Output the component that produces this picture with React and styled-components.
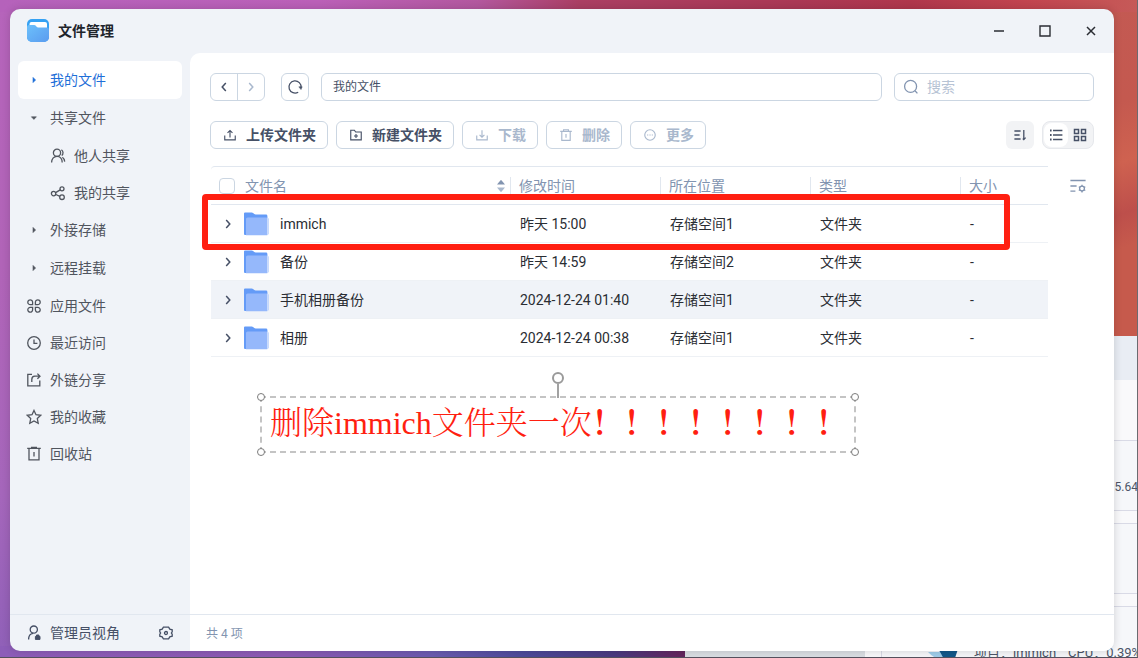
/**
 *
 * FileManager
 *
 */

import React from 'react'
import styled, { createGlobalStyle } from 'styled-components'

const Colors = {
  blue: '#1f6fd8',
  text: '#2a2d33',
  nav: '#50555e',
  strong: '#465066',
  muted: '#8294b0',
  disabled: '#a9b8cd',
  border: '#cbd6e2',
  line: '#e1e7ef',
  panel: '#f0f3f8',
  red: '#ff1f11',
}

const GlobalStyle = createGlobalStyle`
  *, *::before, *::after {
    box-sizing: border-box;
  }

  body {
    margin: 0;
    overflow: hidden;
    font-family: Roboto, 'Noto Sans CJK SC', sans-serif;
    font-size: 14px;
    line-height: 20px;
    color: ${Colors.text};
  }

  button, input {
    font: inherit;
    color: inherit;
  }

  button {
    padding: 0;
    border: 0;
    background: none;
    cursor: pointer;
  }

  svg {
    display: block;
    flex: none;
  }
`

const Desktop = styled.div`
  position: relative;
  height: 100vh;
  overflow: hidden;
  background:
    linear-gradient(to right, #8d5db8 0%, #8c5bb4 25%, #6a5bb0 38%, #4d4a9a 46%, #4a3a80 54%, #64265e 60%) bottom / 100% 12px no-repeat,
    linear-gradient(to right, #b562bb 0%, #bb60b8 28%, #b3589f 42%, #ab3f63 51%, #ab3855 70%, #b0374c 80%, #c2444f 90%, #c65a58 100%) top / 100% 12px no-repeat,
    linear-gradient(to bottom, #b664bb 0%, #b164b8 40%, #a566bb 75%, #8f60b8 100%) left / 50% 100% no-repeat,
    linear-gradient(160deg, #c25a5a 0%, #c4594f 35%, #cf6250 42%, #bd4f4b 48%, #c65a4c 52%) right / 50% 100% no-repeat;

  &::after {
    content: '';
    position: absolute;
    inset: 0;
    border-right: 1px solid #6b6b70;
    border-bottom: 1px solid #55505c;
    pointer-events: none;
  }
`

const BackWindow = styled.section`
  position: absolute;
  top: 336px;
  right: 0;
  bottom: 0;
  width: 453px;
  display: grid;
  grid-template-columns: 180px minmax(0, 1fr);
  grid-template-rows: 44px 1fr;
  background: #f9f9fb;
  font-size: 13px;
  color: #4c5568;
`

const BackTitle = styled.div`
  grid-column: 1 / -1;
  background: #e9edf4;
`

const BackSide = styled.div`
  background: #dadee3;
`

const BackCards = styled.div`
  display: flex;
  flex-direction: column;
  gap: 12px;
  padding: 60px 0 0 16px;
`

const BackCard = styled.div`
  display: flex;
  align-items: center;
  gap: 12px;
  height: 71px;
  flex: none;
  padding: 22px 0 0 46px;
  border: 1px solid #d9dae6;
  border-right: 0;
  background: #f6f7fa;
  white-space: nowrap;
`

const BackValue = styled.span`
  margin-left: auto;
  font-size: 12px;
`

const Window = styled.main`
  position: absolute;
  inset: 9px 24px 7px 10px;
  display: grid;
  grid-template-columns: 180px minmax(0, 1fr);
  grid-template-rows: 44px minmax(0, 1fr) 37px;
  overflow: hidden;
  border-radius: 10px;
  background: ${Colors.panel};
  box-shadow: 0 0 8px rgba(0, 0, 0, 0.16);
`

const TitleBar = styled.header`
  grid-column: 1 / -1;
  display: flex;
  align-items: center;
  gap: 8px;
  padding-left: 16px;
`

const Title = styled.h1`
  flex: 1;
  margin: 0;
  font-size: 14px;
  font-weight: 700;
  color: #20242b;
`

const WindowControls = styled.div`
  display: flex;
  height: 100%;
`

const WindowButton = styled.button`
  display: grid;
  place-items: center;
  width: 46px;
`

const Sidebar = styled.nav`
  padding: 8px;
`

const NavItem = styled.a`
  display: flex;
  align-items: center;
  gap: 8px;
  height: ${props => (props.$compact ? 37 : 38)}px;
  padding-left: ${props => (props.$nested ? 32 : 8)}px;
  border-radius: 6px;
  background: ${props => (props.$active ? '#fff' : 'transparent')};
  color: ${props => (props.$active ? Colors.blue : Colors.nav)};
  text-decoration: none;
`

const Content = styled.section`
  padding: 20px 20px 0;
  border-top-left-radius: 10px;
  background: #fff;
`

const AddressRow = styled.div`
  display: flex;
  gap: 12px;
  margin-bottom: 20px;
`

const History = styled.div`
  display: flex;
  height: 28px;
  margin-right: 4px;
  border: 1px solid ${Colors.border};
  border-radius: 6px;
`

const HistoryButton = styled.button`
  display: grid;
  place-items: center;
  width: 26px;
  color: ${Colors.strong};

  & + & {
    width: 27px;
    border-left: 1px solid ${Colors.border};
    color: ${Colors.disabled};
  }
`

const RefreshButton = styled.button`
  display: grid;
  place-items: center;
  width: 28px;
  height: 28px;
  border: 1px solid ${Colors.border};
  border-radius: 6px;
  color: ${Colors.strong};
`

const Field = styled.label`
  display: flex;
  align-items: center;
  gap: 8px;
  flex: ${props => (props.$grow ? '1' : 'none')};
  width: ${props => (props.$grow ? 'auto' : '200px')};
  height: 28px;
  padding: 0 8px;
  border: 1px solid ${Colors.border};
  border-radius: 6px;
  color: ${Colors.muted};
`

const FieldInput = styled.input`
  flex: 1;
  min-width: 0;
  padding: 0;
  border: 0;
  outline: 0;
  background: none;
  color: ${Colors.strong};

  &::placeholder {
    color: #b7c3d4;
    opacity: 1;
  }
`

const PathInput = styled(FieldInput)`
  padding: 0 3px;
  font-size: 12px;
`

const Toolbar = styled.div`
  display: flex;
  gap: 8px;
  margin-bottom: 17px;
`

const ActionButton = styled.button`
  display: flex;
  align-items: center;
  gap: 8px;
  height: 28px;
  padding: 0 11px;
  border: 1px solid ${Colors.border};
  border-radius: 6px;
  font-weight: 700;
  color: ${Colors.strong};

  &:disabled {
    color: ${Colors.disabled};
    cursor: default;
  }

  svg {
    padding: 1px;
  }
`

const SortButton = styled.button`
  display: grid;
  place-items: center;
  width: 28px;
  height: 28px;
  margin-left: auto;
  border-radius: 6px;
  background: #f2f3f5;
  color: ${Colors.strong};
`

const ViewSwitch = styled.div`
  display: flex;
  align-items: center;
  height: 28px;
  padding: 0 1px;
  border: 1px solid #e6e8ec;
  border-radius: 8px;
  background: #f2f3f5;
  color: ${Colors.strong};
`

const ViewButton = styled.button`
  display: grid;
  place-items: center;
  width: 24px;
  height: 24px;
  border-radius: 8px;
  background: ${props => (props.$active ? '#fff' : 'transparent')};
`

const ListArea = styled.div`
  display: flex;
  gap: 22px;
  padding: 0 8px 0 1px;
`

const TableWrap = styled.div`
  position: relative;
  flex: 1;
  min-width: 0;
`

const ColumnsButton = styled.button`
  width: 16px;
  height: 40px;
  color: ${Colors.muted};
`

const Table = styled.table`
  width: 100%;
  table-layout: fixed;
  border-spacing: 0;
  border-top: 1px solid ${Colors.line};
  border-top-left-radius: 4px;
`

const HeadCell = styled.th`
  width: ${props => (props.$width ? `${props.$width}px` : 'auto')};
  height: 38px;
  padding: 0;
  border-bottom: 1px solid ${Colors.line};
  font-weight: 400;
  line-height: 16px;
  text-align: left;
  color: ${Colors.muted};
`

const HeadLabel = styled.div`
  display: flex;
  align-items: center;
  height: 17px;
  padding-left: 8px;
  border-right: ${props => (props.$last ? '0' : `1px solid ${Colors.line}`)};
`

const NameHead = styled(HeadLabel)`
  justify-content: space-between;
  padding-right: 5px;
`

const CheckLabel = styled.label`
  display: flex;
  align-items: center;
  gap: 10px;
`

const Checkbox = styled.input`
  appearance: none;
  width: 16px;
  height: 16px;
  margin: 0;
  border: 1px solid ${Colors.border};
  border-radius: 4px;
  background: #fff;
`

const Row = styled.tr`
  background: ${props => (props.$hovered ? Colors.panel : '#fff')};
`

const Cell = styled.td`
  height: 38px;
  padding: 0 9px;
  border-bottom: 1px solid #eef1f5;
`

const NameCell = styled.div`
  display: flex;
  align-items: center;
  gap: 8px;
`

const Expander = styled.button`
  width: 16px;
  color: ${Colors.strong};
`

const Highlight = styled.div`
  position: absolute;
  top: 28px;
  left: -9px;
  right: 38px;
  height: 56px;
  border: 6px solid ${Colors.red};
  border-radius: 4px;
  pointer-events: none;
`

const Note = styled.div`
  position: absolute;
  top: 230px;
  left: 49px;
  width: 596px;
  height: 57px;
  padding: 7px 8px;
  border: 2px dashed #c4c4c4;
  font-family: 'Liberation Serif', 'Noto Serif CJK SC', 'Noto Sans CJK SC', serif;
  font-size: 32px;
  font-weight: 300;
  line-height: 36px;
  white-space: nowrap;
  color: ${Colors.red};
`

const Bangs = styled.span`
  font-weight: 700;
`

const Handle = styled.span`
  position: absolute;
  top: ${props => (props.$bottom ? 'auto' : '-5px')};
  bottom: ${props => (props.$bottom ? '-5px' : 'auto')};
  left: ${props => (props.$right ? 'auto' : '-5px')};
  right: ${props => (props.$right ? '-5px' : 'auto')};
  width: 8px;
  height: 8px;
  border: 1px solid #7c7c7c;
  border-radius: 50%;
  background: #fff;
`

const RotateHandle = styled.span`
  position: absolute;
  bottom: 100%;
  left: 50%;
  width: 2px;
  height: 14px;
  margin-left: -1px;
  background: #a2a2a2;

  &::before {
    content: '';
    position: absolute;
    bottom: 100%;
    left: -5px;
    width: 12px;
    height: 12px;
    border: 2px solid #9a9a9a;
    border-radius: 50%;
    background: #fff;
  }
`

const SideFooter = styled.div`
  display: flex;
  align-items: center;
  justify-content: space-between;
  padding: 0 16px;
  border-top: 1px solid ${Colors.line};
  color: ${Colors.strong};
`

const AdminButton = styled.button`
  display: flex;
  align-items: center;
  gap: 8px;
`

const Status = styled.footer`
  padding: 9px 16px 7px;
  border-top: 1px solid ${Colors.line};
  background: #fff;
  font-size: 12px;
  color: ${Colors.muted};
`

const paths = {
  right: <path d="M7 5.4 9.6 8 7 10.6z" fill="currentColor" strokeWidth="0.6" />,
  down: <path d="M5.4 6.8h5L7.9 9.4z" fill="currentColor" strokeWidth="0.6" />,
  users: (
    <>
      <circle cx="7" cy="4.8" r="3.6" />
      <path d="M1.6 14.6c0-3.6 2-6.2 5.4-6.2s5.2 2.6 5.2 6.2M11.4 1.7c2 1.2 2.2 4.4.3 5.8M12.4 9.2c1.4 1 2.2 2.4 2.3 4.4" />
    </>
  ),
  share: (
    <>
      <circle cx="3.6" cy="8.6" r="2.2" />
      <circle cx="12" cy="3.8" r="2" />
      <circle cx="12" cy="12.2" r="2.3" />
      <path d="M5.6 7.6l4.6-2.7M5.8 9.5l4.1 1.8" />
    </>
  ),
  apps: (
    <path d="M6.6 6.6H4.2a2.4 2.4 0 1 1 2.4-2.4zM9.4 6.6V4.2a2.4 2.4 0 1 1 2.4 2.4zM6.6 9.4v2.4a2.4 2.4 0 1 1-2.4-2.4zM9.4 9.4h2.4a2.4 2.4 0 1 1-2.4 2.4z" />
  ),
  clock: (
    <>
      <circle cx="8" cy="8" r="6.3" />
      <path d="M8 4.4V8.4h3.4" />
    </>
  ),
  link: <path d="M6 2.4H1.8v11.4h12V8.6M5.8 10V7.4c0-2 1.2-3.2 3-3.2h5M11.4 1.6 14 4.2l-2.6 2.6" />,
  star: <path d="M8 1.4l2 4.3 4.7.6-3.4 3.2.9 4.7L8 11.9l-4.2 2.3.9-4.7L1.3 6.3 6 5.7z" />,
  trash: <path d="M1.2 2.4h13.6M5 1.4h6M3 2.6v11.2h10V2.6M8 6v4.4" />,
  upload: <path d="M2 8.6v5h12v-5M8 10.8V3M5.2 5.6 8 2.8l2.8 2.8" />,
  download: <path d="M2 8.6v5h12v-5M8 2.6v7.8M5.2 7.8 8 10.6l2.8-2.8" />,
  newFolder: <path d="M2 13.6V2.6h4.2l1.4 2H14v9zM8 6.8v4.6M5.7 9.1h4.6" />,
  bin: <path d="M1.4 3.8h13.2M5.2 3.6V2h5.6v1.6M3.2 3.8v10.4h9.6V3.8M8 6.8v4.2" />,
  more: (
    <>
      <circle cx="8" cy="8" r="6" />
      <path d="M4.7 8h1.3M7.4 8h1.3M10 8h1.3" />
    </>
  ),
  prev: <path d="M9.8 4 6.2 8l3.6 4" strokeWidth="1.5" />,
  next: <path d="M6.2 4 9.8 8l-3.6 4" strokeWidth="1.5" />,
  refresh: (
    <>
      <path d="M11.2 13.2a6.1 6.1 0 1 1 2.9-4.6" />
      <path d="M11.8 7.8h3.4l-1.2 2.8z" fill="currentColor" strokeWidth="0.5" />
    </>
  ),
  search: (
    <>
      <circle cx="7.6" cy="7.4" r="6" />
      <path d="M12 11.8l2.4 2.6" />
    </>
  ),
  sort: (
    <>
      <path d="M2.4 4h6.2M2.4 8h5.2M2.4 12h6.2" />
      <path d="M11.8 3v9.6M13.6 10.6l-1.8 2-1-1.1" />
    </>
  ),
  list: (
    <>
      <path d="M5 3.5h9.4M5 8h9.4M5 12.5h9.4" />
      <path d="M2 3.5h1.6M2 8h1.6M2 12.5h1.6" strokeWidth="1.8" />
    </>
  ),
  grid: <path d="M2.5 2.5h4v4h-4zM9.5 2.5h4v4h-4zM2.5 9.5h4v4h-4zM9.5 9.5h4v4h-4z" strokeWidth="1.5" />,
  columns: (
    <>
      <path d="M0.4 2.5h15.2M0.4 8h6.2M0.4 13.2h5" />
      <circle cx="12" cy="10.6" r="2.4" />
      <path d="M12 6.8v1.4M12 13v1.6M8.8 8.8l1.2.7M14 11.8l1.3.7M8.8 12.5l1.2-.7M14 9.5l1.3-.7" />
    </>
  ),
  admin: (
    <>
      <circle cx="7.8" cy="4.6" r="3.6" />
      <path d="M2.6 14.6c0-3.6 1.6-6 4.4-6.3" />
      <path d="M9.4 11.4h4.6v3H9.4zM10.5 11.4V10h2.4v1.4" fill="currentColor" strokeWidth="1" />
    </>
  ),
  gear: (
    <>
      <path d="M5.4 2.2h5.2l1.2 2 2.4.6v2L13.4 8l.8 1.2v2l-2.4.6-1.2 2H5.4l-1.2-2-2.4-.6v-2L2.6 8l-.8-1.2v-2l2.4-.6z" />
      <circle cx="8" cy="8" r="1.5" />
    </>
  ),
  minimize: <path d="M3 8h10" strokeWidth="1.7" />,
  maximize: <path d="M3 3h10v10H3z" strokeWidth="1.4" />,
  close: <path d="M4 4l8 8M12 4l-8 8" strokeWidth="1.5" />,
}

function Icon({ name }) {
  return (
    <svg
      width="16"
      height="16"
      viewBox="0 0 16 16"
      fill="none"
      stroke="currentColor"
      strokeWidth="1.3"
      aria-hidden="true"
    >
      {paths[name]}
    </svg>
  )
}

function AppIcon() {
  return (
    <svg width="24" height="24" viewBox="0 0 24 24" aria-hidden="true">
      <defs>
        <linearGradient id="appFront" x1="0" y1="0" x2="1" y2="1">
          <stop offset="0" stopColor="#6cc0fb" />
          <stop offset="1" stopColor="#5a9bef" />
        </linearGradient>
      </defs>
      <rect x="1" y="0" width="22" height="23" rx="5" fill="#35a1f3" />
      <rect x="3.5" y="3" width="17.5" height="10" rx="2" fill="#fff" />
      <path
        d="M1 8Q1 6 3.2 6H8q1.4 0 2 1.1.7 1.4 2 1.4h8.8Q23 8.5 23 10.5v7.5a5 5 0 0 1-5 5H6a5 5 0 0 1-5-5z"
        fill="url(#appFront)"
      />
    </svg>
  )
}

function FolderIcon() {
  return (
    <svg width="28" height="24" viewBox="1 0 28 24" aria-hidden="true">
      <path d="M1 1.5Q1 .5 2 .5h6.6q1 0 1.8.8l.9.8q.5.4 1.3.4H23q1.4 0 1.4 1.4V23H2q-1 0-1-1z" fill="#649bf7" />
      <path d="M3 7q0-1.6 1.6-1.6h19.1q1.8 0 1.8 1.6v14.6q0 1.6-1.6 1.6H3z" fill="#95b8fb" />
      <path d="M24 5.5q1.4 0 1.4 1.5v14.6q0 1.6-1.4 1.6z" fill="#c9dbfc" />
    </svg>
  )
}

function SortArrows() {
  return (
    <svg width="8" height="14" viewBox="0 0 8 14" aria-hidden="true">
      <path d="M4 .8 8 5.4H0z" fill="#8294b0" />
      <path d="M0 8.6h8l-4 4.6z" fill="#a9b8cd" />
    </svg>
  )
}

function Bird() {
  return (
    <svg width="34" height="28" viewBox="0 0 34 28" aria-hidden="true">
      <path d="M0 13h14l6 10Q7 21 0 13z" fill="#9fcdea" />
      <path d="M10 10h20l-3 9 2 8H18q-2-9-8-17z" fill="#12588a" />
    </svg>
  )
}

const navItems = [
  { icon: 'right', label: '我的文件', active: true },
  { icon: 'down', label: '共享文件' },
  { icon: 'users', label: '他人共享', nested: true, compact: true },
  { icon: 'share', label: '我的共享', nested: true, compact: true },
  { icon: 'right', label: '外接存储' },
  { icon: 'right', label: '远程挂载' },
  { icon: 'apps', label: '应用文件', compact: true },
  { icon: 'clock', label: '最近访问', compact: true },
  { icon: 'link', label: '外链分享', compact: true },
  { icon: 'star', label: '我的收藏', compact: true },
  { icon: 'trash', label: '回收站', compact: true },
]

const actions = [
  { icon: 'upload', label: '上传文件夹' },
  { icon: 'newFolder', label: '新建文件夹' },
  { icon: 'download', label: '下载', disabled: true },
  { icon: 'bin', label: '删除', disabled: true },
  { icon: 'more', label: '更多', disabled: true },
]

const files = [
  { name: 'immich', time: '昨天 15:00', place: '存储空间1' },
  { name: '备份', time: '昨天 14:59', place: '存储空间2' },
  { name: '手机相册备份', time: '2024-12-24 01:40', place: '存储空间1', hovered: true },
  { name: '相册', time: '2024-12-24 00:38', place: '存储空间1' },
]

function FileTable() {
  return (
    <Table>
      <thead>
        <tr>
          <HeadCell>
            <NameHead>
              <CheckLabel>
                <Checkbox type="checkbox" />
                文件名
              </CheckLabel>
              <SortArrows />
            </NameHead>
          </HeadCell>
          <HeadCell $width={150}>
            <HeadLabel>修改时间</HeadLabel>
          </HeadCell>
          <HeadCell $width={150}>
            <HeadLabel>所在位置</HeadLabel>
          </HeadCell>
          <HeadCell $width={150}>
            <HeadLabel>类型</HeadLabel>
          </HeadCell>
          <HeadCell $width={87}>
            <HeadLabel $last>大小</HeadLabel>
          </HeadCell>
        </tr>
      </thead>
      <tbody>
        {files.map(file => (
          <Row key={file.name} $hovered={file.hovered}>
            <Cell>
              <NameCell>
                <Expander aria-label="展开">
                  <Icon name="next" />
                </Expander>
                <FolderIcon />
                {file.name}
              </NameCell>
            </Cell>
            <Cell>{file.time}</Cell>
            <Cell>{file.place}</Cell>
            <Cell>文件夹</Cell>
            <Cell>-</Cell>
          </Row>
        ))}
      </tbody>
    </Table>
  )
}

function App() {
  return (
    <Desktop>
      <GlobalStyle />
      <BackWindow>
        <BackTitle />
        <BackSide />
        <BackCards>
          <BackCard>
            <BackValue>5.64</BackValue>
          </BackCard>
          <BackCard />
          <BackCard>
            <Bird />
            <span>项目：immich</span>
            <span>CPU：0.39%</span>
          </BackCard>
        </BackCards>
      </BackWindow>

      <Window>
        <TitleBar>
          <AppIcon />
          <Title>文件管理</Title>
          <WindowControls>
            <WindowButton aria-label="最小化">
              <Icon name="minimize" />
            </WindowButton>
            <WindowButton aria-label="最大化">
              <Icon name="maximize" />
            </WindowButton>
            <WindowButton aria-label="关闭">
              <Icon name="close" />
            </WindowButton>
          </WindowControls>
        </TitleBar>

        <Sidebar>
          {navItems.map(item => (
            <NavItem
              key={item.label}
              href="#"
              $active={item.active}
              $nested={item.nested}
              $compact={item.compact}
            >
              <Icon name={item.icon} />
              {item.label}
            </NavItem>
          ))}
        </Sidebar>

        <Content>
          <AddressRow>
            <History>
              <HistoryButton aria-label="后退">
                <Icon name="prev" />
              </HistoryButton>
              <HistoryButton aria-label="前进">
                <Icon name="next" />
              </HistoryButton>
            </History>
            <RefreshButton aria-label="刷新">
              <Icon name="refresh" />
            </RefreshButton>
            <Field $grow>
              <PathInput aria-label="路径" defaultValue="我的文件" />
            </Field>
            <Field>
              <Icon name="search" />
              <FieldInput aria-label="搜索" placeholder="搜索" />
            </Field>
          </AddressRow>

          <Toolbar>
            {actions.map(action => (
              <ActionButton key={action.label} disabled={action.disabled}>
                <Icon name={action.icon} />
                {action.label}
              </ActionButton>
            ))}
            <SortButton aria-label="排序">
              <Icon name="sort" />
            </SortButton>
            <ViewSwitch>
              <ViewButton $active aria-label="列表">
                <Icon name="list" />
              </ViewButton>
              <ViewButton aria-label="网格">
                <Icon name="grid" />
              </ViewButton>
            </ViewSwitch>
          </Toolbar>

          <ListArea>
            <TableWrap>
              <FileTable />
              <Highlight />
              <Note>
                删除immich文件夹一次<Bangs>！！！！！！！！</Bangs>
                <Handle />
                <Handle $right />
                <Handle $bottom />
                <Handle $right $bottom />
                <RotateHandle />
              </Note>
            </TableWrap>
            <ColumnsButton aria-label="列设置">
              <Icon name="columns" />
            </ColumnsButton>
          </ListArea>
        </Content>

        <SideFooter>
          <AdminButton>
            <Icon name="admin" />
            管理员视角
          </AdminButton>
          <button aria-label="设置">
            <Icon name="gear" />
          </button>
        </SideFooter>
        <Status>共 4 项</Status>
      </Window>
    </Desktop>
  )
}

export default App
